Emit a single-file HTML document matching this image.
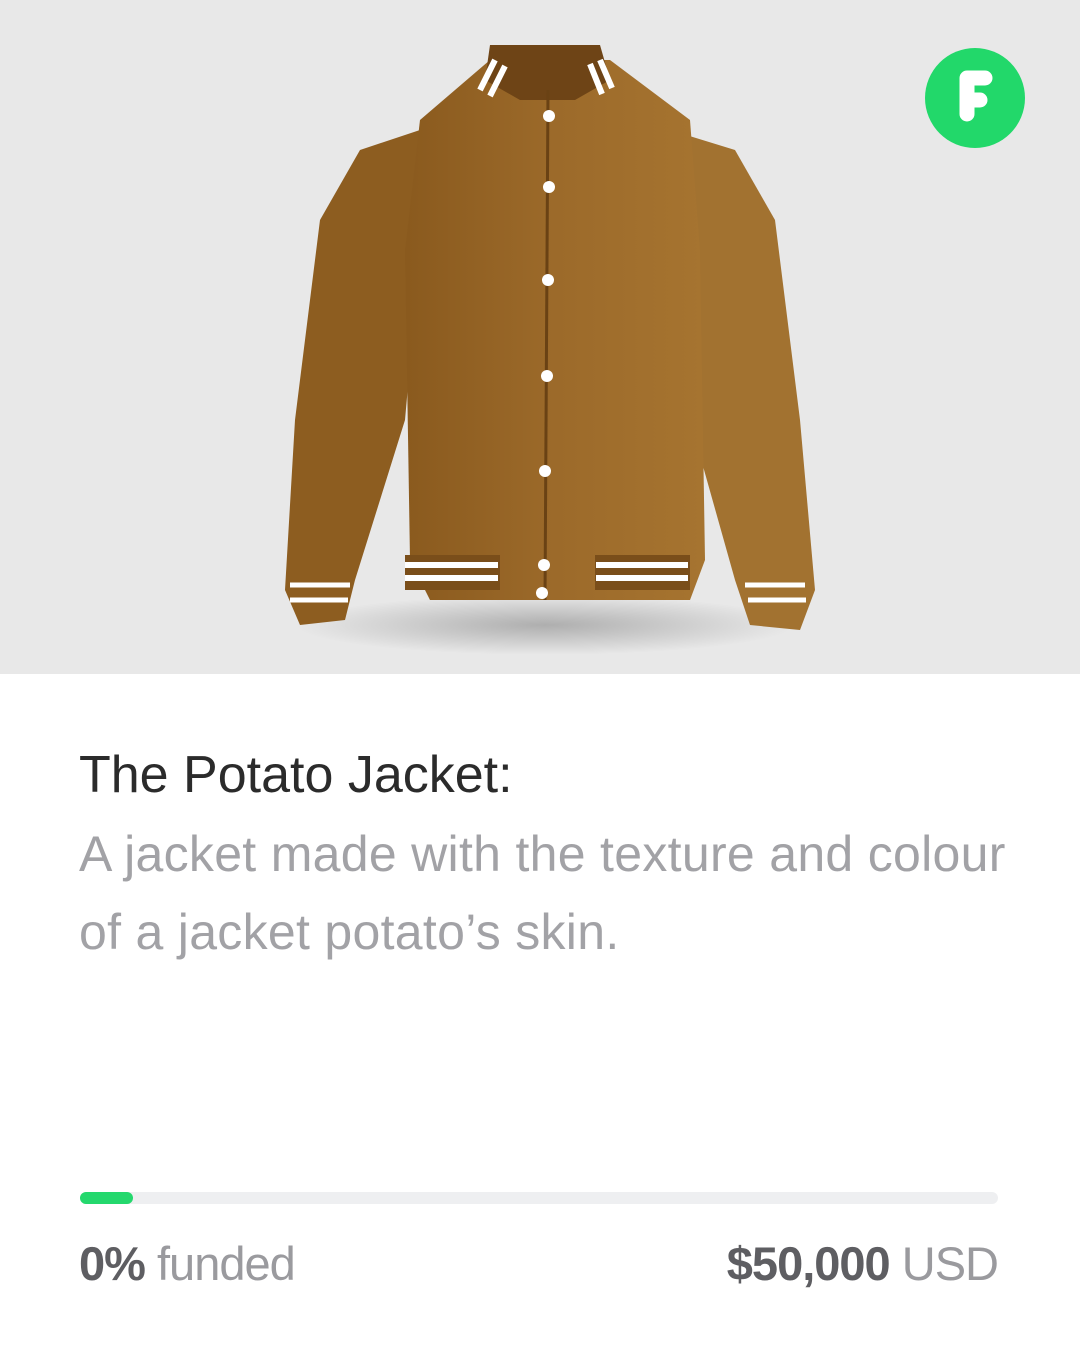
<!DOCTYPE html>
<html><head><style>
body{margin:0;width:1080px;height:1350px;background:#fff;font-family:"Liberation Sans",sans-serif;position:relative;overflow:hidden}
.top{position:absolute;left:0;top:0;width:1080px;height:674px;background:#e8e8e8}
.t{position:absolute;left:79px;white-space:nowrap}
</style></head><body>
<div class="top">
<svg width="1080" height="674" viewBox="0 0 1080 674">
<defs>
<linearGradient id="g" x1="0" x2="1"><stop offset="0" stop-color="#8a5a1e"/><stop offset=".5" stop-color="#9c6a2a"/><stop offset="1" stop-color="#a67430"/></linearGradient>
<radialGradient id="sh"><stop offset="0" stop-color="#000" stop-opacity=".25"/><stop offset="1" stop-color="#000" stop-opacity="0"/></radialGradient>
</defs>
<ellipse cx="545" cy="625" rx="250" ry="30" fill="url(#sh)"/>
<path d="M420 130 L360 150 L320 220 L295 420 L285 590 L300 625 L345 620 L355 580 L405 420 L420 250Z" fill="#8d5d20"/>
<path d="M670 130 L735 150 L775 220 L800 420 L815 590 L800 630 L750 625 L735 580 L690 420 L675 250Z" fill="#a27230"/>
<path d="M490 60 L420 120 L405 250 L410 560 L430 600 L690 600 L705 560 L700 250 L690 120 L610 60 Z" fill="url(#g)"/>
<path d="M490 45 L600 45 L610 80 L575 100 L520 100 L485 80Z" fill="#6e4416"/>
<path d="M480 90 L495 60 M490 96 L505 66 M600 60 L612 88 M590 64 L602 94" stroke="#fff" stroke-width="6"/>
<rect x="405" y="555" width="95" height="35" fill="#7a4e1a"/><rect x="595" y="555" width="95" height="35" fill="#7a4e1a"/>
<path d="M405 565H498M405 578H498M596 565H688M596 578H688" stroke="#fff" stroke-width="6"/>
<path d="M290 585H350M290 600H348M745 585H805M748 600H806" stroke="#fff" stroke-width="5"/>
<line x1="548" y1="90" x2="545" y2="600" stroke="#6a4214" stroke-width="3"/>
<g fill="#fff"><circle cx="549" cy="116" r="6"/><circle cx="549" cy="187" r="6"/><circle cx="548" cy="280" r="6"/><circle cx="547" cy="376" r="6"/><circle cx="545" cy="471" r="6"/><circle cx="544" cy="565" r="6"/><circle cx="542" cy="593" r="6"/></g>
</svg>
<div style="position:absolute;left:925px;top:48px;width:100px;height:100px;border-radius:50%;background:#22d86a"></div>
<svg style="position:absolute;left:925px;top:48px" width="100" height="100"><path d="M42 30 V66 M42 30 H60 M42 52 H55" stroke="#fff" stroke-width="15" stroke-linecap="round" stroke-linejoin="round" fill="none"/></svg>
</div>
<div class="t" style="top:745px;font-size:52px;color:#2b2b2b">The Potato Jacket:</div>
<div class="t" style="top:815px;font-size:50px;color:#a2a2a6;line-height:78px;letter-spacing:0.3px">A jacket made with the texture and colour<br>of a jacket potato’s skin.</div>
<div style="position:absolute;left:80px;top:1192px;width:918px;height:12px;border-radius:6px;background:#eeeff1"></div>
<div style="position:absolute;left:80px;top:1192px;width:53px;height:12px;border-radius:6px;background:#24d86d"></div>
<div class="t" style="top:1236px;font-size:47px;letter-spacing:-1px;color:#9a9a9e"><b style="color:#5e5e62">0%</b> funded</div>
<div style="position:absolute;right:82px;top:1236px;font-size:47px;letter-spacing:-1px;color:#9a9a9e;white-space:nowrap"><b style="color:#5e5e62">$50,000</b> USD</div>
</body></html>
